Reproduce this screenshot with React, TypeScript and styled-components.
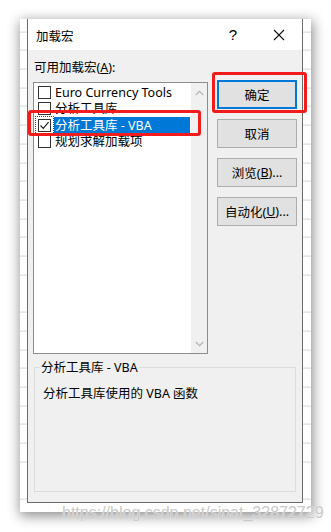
import React from 'react';
import styled, { createGlobalStyle } from 'styled-components';

const GlobalStyle = createGlobalStyle`
  html, body {
    margin: 0;
    padding: 0;
    background: #fff;
  }
  body {
    font-family: 'Noto Sans', 'Noto Sans CJK SC', sans-serif;
    font-size: 12px;
    color: #000;
  }
`;

interface AddIn {
  name: string;
  checked: boolean;
  selected?: boolean;
}

const addIns: AddIn[] = [
  { name: 'Euro Currency Tools', checked: false },
  { name: '分析工具库', checked: false },
  { name: '分析工具库 - VBA', checked: true, selected: true },
  { name: '规划求解加载项', checked: false },
];

const buttons = [
  { label: '确定', isDefault: true },
  { label: '取消' },
  { label: '浏览', key: 'B', tail: '...' },
  { label: '自动化', key: 'U', tail: '...' },
];

const App: React.FC = () => {
  return (
    <Page>
      <GlobalStyle />
      <Shot>
        <Dialog>
          <TitleBar>
            <Title>加载宏</Title>
            <TitleButton>?</TitleButton>
            <TitleButton>
              <svg width="12" height="12" viewBox="0 0 12 12">
                <path d="M1 1 L11 11 M11 1 L1 11" stroke="#111" strokeWidth="1.1" />
              </svg>
            </TitleButton>
          </TitleBar>

          <Body>
            <TopRow>
              <ListColumn>
                <FieldLabel>
                  可用加载宏(<u>A</u>):
                </FieldLabel>
                <ListBox>
                  <Items>
                    {addIns.map((item) => (
                      <Row key={item.name}>
                        <CheckFocus focused={!!item.selected}>
                          <Check>
                            {item.checked && (
                              <svg width="11" height="11" viewBox="0 0 11 11">
                                <path d="M1.5 5.5 L4.3 8.4 L9.6 2.2" fill="none" stroke="#222" strokeWidth="1.2" />
                              </svg>
                            )}
                          </Check>
                        </CheckFocus>
                        <ItemText selected={!!item.selected}>{item.name}</ItemText>
                      </Row>
                    ))}
                  </Items>
                  <ScrollBar>
                    <svg width="9" height="6" viewBox="0 0 9 6">
                      <path d="M0.8 5 L4.5 1.3 L8.2 5" fill="none" stroke="#b4b4b4" strokeWidth="1.2" />
                    </svg>
                    <svg width="9" height="6" viewBox="0 0 9 6">
                      <path d="M0.8 1 L4.5 4.7 L8.2 1" fill="none" stroke="#b4b4b4" strokeWidth="1.2" />
                    </svg>
                  </ScrollBar>
                </ListBox>
              </ListColumn>

              <ButtonColumn>
                {buttons.map((b) => (
                  <Button key={b.label} isDefault={!!b.isDefault}>
                    {b.label}
                    {b.key && (
                      <>
                        (<u>{b.key}</u>){b.tail}
                      </>
                    )}
                  </Button>
                ))}
              </ButtonColumn>
            </TopRow>

            <Group>
              <Legend>分析工具库 - VBA</Legend>
              <Description>分析工具库使用的 VBA 函数</Description>
            </Group>
          </Body>
        </Dialog>
      </Shot>

      <Mark style={{ left: 28, top: 110, width: 173, height: 26 }} />
      <Mark style={{ left: 212, top: 72, width: 95, height: 41 }} />
      <Watermark>https://blog.csdn.net/sinat_32872729</Watermark>
    </Page>
  );
};

export default App;

const Page = styled.div`
  position: relative;
  width: 331px;
  height: 532px;
  padding: 19px 0 0 20px;
  box-sizing: border-box;
  overflow: hidden;
`;

const Shot = styled.div`
  width: 291px;
  height: 493px;
  padding-left: 7px;
  box-sizing: border-box;
  background-color: #fff;
  background-image: repeating-linear-gradient(
    to bottom,
    transparent 0,
    transparent 17.7px,
    #d6d6d6 17.7px,
    #d6d6d6 18.7px
  );
  background-position: 0 -5.4px;
  box-shadow: 1px 3px 12px 1px rgba(0, 0, 0, 0.45);
`;

const Dialog = styled.div`
  width: 276px;
  height: 484px;
  display: flex;
  flex-direction: column;
  border: 1px solid #6a6a6a;
  border-top: none;
  box-sizing: border-box;
  background: #f0f0f0;
`;

const TitleBar = styled.div`
  height: 31px;
  flex-shrink: 0;
  display: flex;
  align-items: center;
  background: #fff;
  padding-left: 8px;
`;

const Title = styled.span`
  flex: 1;
  font-size: 12.5px;
  margin-top: 1px;
`;

const TitleButton = styled.span`
  width: 46px;
  height: 31px;
  display: flex;
  align-items: center;
  justify-content: center;
  font-family: 'Liberation Sans', sans-serif;
  font-size: 15px;
`;

const Body = styled.div`
  flex: 1;
  display: flex;
  flex-direction: column;
  padding: 9px 5px 10px 5px;
`;

const TopRow = styled.div`
  display: flex;
`;

const ListColumn = styled.div`
  display: flex;
  flex-direction: column;
`;

const FieldLabel = styled.div`
  height: 17px;
  line-height: 17px;
  margin-left: 1px;
  margin-bottom: 6px;
  font-size: 12.5px;
`;

const ListBox = styled.div`
  width: 175px;
  height: 272px;
  display: flex;
  border: 1px solid #8c8c8c;
  box-sizing: border-box;
  background: #fff;
`;

const Items = styled.div`
  flex: 1;
  padding-top: 1px;
`;

const Row = styled.div`
  height: 16.5px;
  display: flex;
  align-items: center;
  padding-left: 2px;
`;

const CheckFocus = styled.span<{ focused: boolean }>`
  display: flex;
  padding: 2px;
  margin-right: 1px;
  outline: ${(p) => (p.focused ? '1px dotted #444' : 'none')};
`;

const Check = styled.span`
  width: 13px;
  height: 13px;
  box-sizing: border-box;
  border: 1px solid #333;
  background: #fff;
  display: flex;
  align-items: center;
  justify-content: center;
`;

const ItemText = styled.span<{ selected: boolean }>`
  flex: 1;
  height: 17px;
  line-height: 17px;
  padding-left: 1px;
  margin-right: 1px;
  white-space: nowrap;
  font-size: 12.5px;
  background: ${(p) => (p.selected ? '#0078d7' : 'transparent')};
  color: ${(p) => (p.selected ? '#fff' : '#000')};
`;

const ScrollBar = styled.div`
  width: 16px;
  background: #f0f0f0;
  display: flex;
  flex-direction: column;
  justify-content: space-between;
  align-items: center;
  padding: 7px 0 6px;
  box-sizing: border-box;
`;

const ButtonColumn = styled.div`
  display: flex;
  flex-direction: column;
  gap: 10.5px;
  padding-top: 21px;
  margin-left: 9px;
`;

const Button = styled.div<{ isDefault: boolean }>`
  width: 80px;
  height: 28.5px;
  box-sizing: border-box;
  display: flex;
  align-items: center;
  justify-content: center;
  background: #e1e1e1;
  border: ${(p) => (p.isDefault ? '2px solid #0078d7' : '1px solid #adadad')};
  font-size: 12.5px;
  white-space: nowrap;
`;

const Group = styled.fieldset`
  margin: 5px 1px 0 1px;
  padding: 8px 8px;
  height: 133px;
  box-sizing: border-box;
  border: 1px solid #dcdcdc;
  min-width: 0;
`;

const Legend = styled.legend`
  padding: 0 1px;
  margin-left: -3px;
  line-height: 17px;
  font-size: 12.5px;
`;

const Description = styled.div`
  line-height: 17px;
  margin-top: 1px;
  font-size: 12.5px;
`;

const Mark = styled.div`
  position: absolute;
  box-sizing: border-box;
  border: 3px solid #f21c1c;
  border-radius: 3px;
`;

const Watermark = styled.div`
  position: absolute;
  left: 62px;
  top: 504px;
  font-family: 'Liberation Sans', sans-serif;
  font-size: 16px;
  color: #c9c9c9;
  text-shadow: 0 0 1px #fff;
  white-space: nowrap;
`;
